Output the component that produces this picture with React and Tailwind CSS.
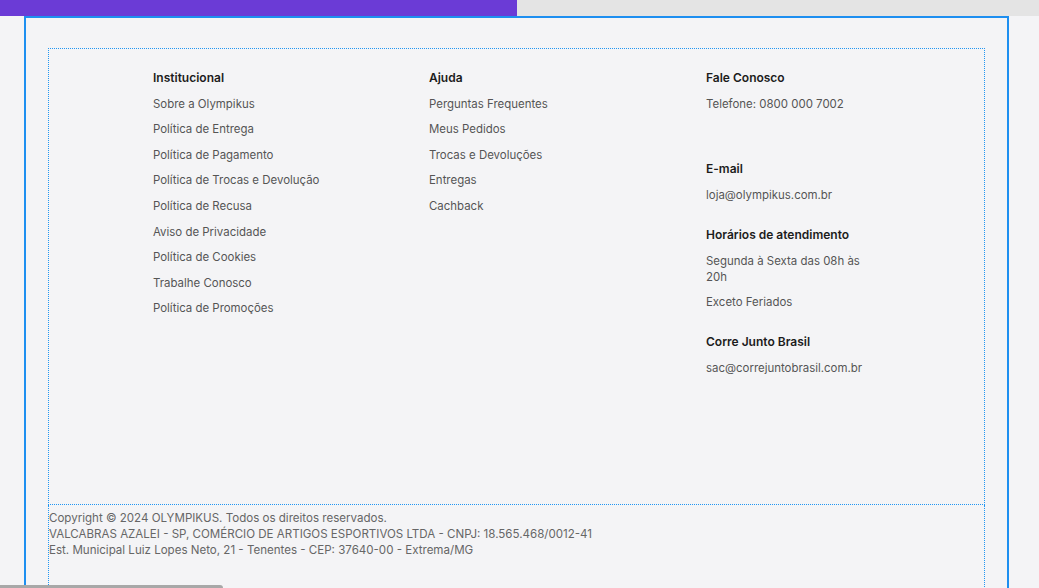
export default function App() {
  const institucional = [
    "Sobre a Olympikus",
    "Política de Entrega",
    "Política de Pagamento",
    "Política de Trocas e Devolução",
    "Política de Recusa",
    "Aviso de Privacidade",
    "Política de Cookies",
    "Trabalhe Conosco",
    "Política de Promoções",
  ];

  const ajuda = [
    "Perguntas Frequentes",
    "Meus Pedidos",
    "Trocas e Devoluções",
    "Entregas",
    "Cachback",
  ];

  return (
    <div
      className="relative h-[588px] overflow-hidden bg-[#f4f4f6]"
      style={{ fontFamily: "Inter, 'Noto Sans', sans-serif" }}
    >
      {/* top progress bar */}
      <div className="flex h-[16px]">
        <div className="w-[517px] bg-[#6b3bd6]" />
        <div className="flex-1 bg-[#e4e4e4]" />
      </div>

      {/* outlined frame */}
      <div className="ml-[24px] h-[600px] w-[985px] border-2 border-b-0 border-[#1e8ff0] px-[22px] pt-[30px]">
        {/* columns */}
        <div className="h-[457px] border border-dotted border-[#2196f3] pl-[104px] pt-[21px]">
          <div className="grid grid-cols-[276px_277px_1fr] leading-4">
            <div className="flex flex-col gap-[9.6px]">
              <h4 className="text-[12px] font-semibold text-[#1c1c1c]">Institucional</h4>
              {institucional.map((item) => (
                <a key={item} className="text-[11.45px] text-[#555555]">
                  {item}
                </a>
              ))}
            </div>

            <div className="flex flex-col gap-[9.6px]">
              <h4 className="text-[12px] font-semibold text-[#1c1c1c]">Ajuda</h4>
              {ajuda.map((item) => (
                <a key={item} className="text-[11.45px] text-[#555555]">
                  {item}
                </a>
              ))}
            </div>

            <div className="flex flex-col gap-[24px]">
              <div className="flex flex-col gap-[10px]">
                <h4 className="text-[12px] font-semibold text-[#1c1c1c]">Fale Conosco</h4>
                <p className="text-[11.45px] text-[#555555]">Telefone: 0800 000 7002</p>
                <p className="h-[15px]" />
              </div>
              <div className="flex flex-col gap-[10px]">
                <h4 className="text-[12px] font-semibold text-[#1c1c1c]">E-mail</h4>
                <p className="text-[11.45px] text-[#555555]">loja@olympikus.com.br</p>
              </div>
              <div className="flex flex-col gap-[9.5px]">
                <h4 className="text-[12px] font-semibold text-[#1c1c1c]">Horários de atendimento</h4>
                <p className="max-w-[165px] text-[11.45px] text-[#555555]">Segunda à Sexta das 08h às 20h</p>
                <p className="text-[11.45px] text-[#555555]">Exceto Feriados</p>
              </div>
              <div className="flex flex-col gap-[10px]">
                <h4 className="text-[12px] font-semibold text-[#1c1c1c]">Corre Junto Brasil</h4>
                <p className="text-[11.45px] text-[#555555]">sac@correjuntobrasil.com.br</p>
              </div>
            </div>
          </div>
        </div>

        {/* copyright */}
        <div className="h-[200px] border-x border-dotted border-[#2196f3] pt-[5px] text-[11.55px] leading-4 text-[#666666]">
          <p>Copyright © 2024 OLYMPIKUS. Todos os direitos reservados.</p>
          <p>VALCABRAS AZALEI - SP, COMÉRCIO DE ARTIGOS ESPORTIVOS LTDA - CNPJ: 18.565.468/0012-41</p>
          <p>Est. Municipal Luiz Lopes Neto, 21 - Tenentes - CEP: 37640-00 - Extrema/MG</p>
        </div>
      </div>

      {/* scrollbar thumb */}
      <div className="absolute bottom-0 left-0 h-[3px] w-[223px] rounded-tr-[3px] bg-[#a8a8a8]" />
    </div>
  );
}
